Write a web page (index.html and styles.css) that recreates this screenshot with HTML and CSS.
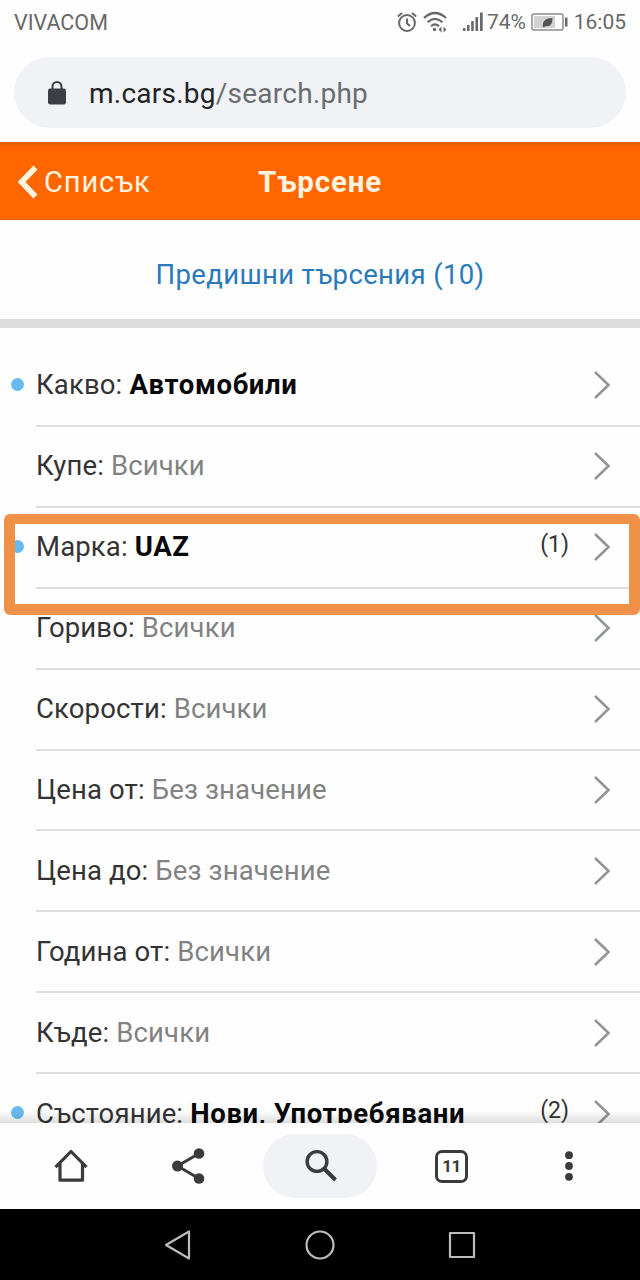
FILE: index.html
```html
<!DOCTYPE html>
<html lang="bg">
<head>
<meta charset="utf-8">
<title>Търсене</title>
<link rel="stylesheet" href="styles.css">
</head>
<body>
<div class="phone">
  <header class="status">
    <span class="carrier">VIVACOM</span>
    <svg class="alarm" width="22" height="22" viewBox="0 0 22 22" fill="none" stroke="#686868" stroke-width="2"><circle cx="11" cy="12" r="7.9"/><path d="M11 7.500v5l3 2.500M1.800 5.500l4.200-3.500M20.200 5.500L16 2"/></svg>
    <svg class="wifi" width="26" height="22" viewBox="0 0 26 22" fill="none" stroke="#686868" stroke-width="2.200"><path d="M1 7Q12-3 23 7M4.500 11.200Q12 4.500 19.500 11.200M8 15.200Q12 11.500 16 15.200"/><circle cx="11.500" cy="18.500" r="1.700" fill="#686868" stroke="none"/><path d="M18.500 15.500v6l-3-3zM20.500 15.500v6l3-3z" fill="#686868" stroke="none"/></svg>
    <svg class="signal" width="22" height="22" viewBox="0 0 22 22" fill="#686868"><path d="M1 17h2.500v3H1zM5 14h2.500v6H5zM9.200 10h2.500v10H9.200zM13.500 6H16v14h-2.500zM18 1.500h2.700V20H18z"/></svg>
    <span class="percent">74%</span>
    <svg class="battery" width="38" height="20" viewBox="0 0 38 20"><rect x="1" y="2" width="31" height="16" rx="2" fill="#fff" stroke="#8c8c8c" stroke-width="1.500"/><path d="M3 4h21v12H3z" fill="#d2d2d2"/><path d="M12 15c-1-6 3-9 9.500-9 0 6-2.500 9-7 8l-1.500 1.500z" fill="#555"/><path d="M34 5.500h2.500v9H34z" fill="#686868"/></svg>
    <span class="clock">16:05</span>
  </header>
  <div class="address">
    <div class="url">
      <svg class="lock" width="18" height="24" viewBox="0 0 18 24"><path d="M4.500 9V5.500a4.500 4.500 0 0 1 9 0V9" fill="none" stroke="#3c3f43" stroke-width="2"/><rect y="7.500" width="18" height="16" rx="2.200" fill="#3c3f43"/></svg>
      <span class="url-text">m.cars.bg<span class="path">/search.php</span></span>
    </div>
  </div>
  <nav class="titlebar">
    <a class="back"><svg width="21" height="34" viewBox="0 0 21 34" fill="none" stroke="#fff4df" stroke-width="5.600"><path d="M18.500 2.500L4.500 17l14 14.500"/></svg><span>Списък</span></a>
    <h1 class="title">Търсене</h1>
  </nav>
  <a class="previous">Предишни търсения (10)</a>
  <main class="list">
    <div class="row marked"><span class="label">Какво: <b>Автомобили</b></span><svg class="chev" viewBox="0 0 18 30"><path d="M2 2l13.500 13L2 28"/></svg></div>
    <div class="row"><span class="label">Купе: <i>Всички</i></span><svg class="chev" viewBox="0 0 18 30"><path d="M2 2l13.500 13L2 28"/></svg></div>
    <div class="row marked"><span class="label">Марка: <b>UAZ</b></span><span class="count">(1)</span><svg class="chev" viewBox="0 0 18 30"><path d="M2 2l13.500 13L2 28"/></svg><div class="highlight"></div></div>
    <div class="row"><span class="label">Гориво: <i>Всички</i></span><svg class="chev" viewBox="0 0 18 30"><path d="M2 2l13.500 13L2 28"/></svg></div>
    <div class="row"><span class="label">Скорости: <i>Всички</i></span><svg class="chev" viewBox="0 0 18 30"><path d="M2 2l13.500 13L2 28"/></svg></div>
    <div class="row"><span class="label">Цена от: <i>Без значение</i></span><svg class="chev" viewBox="0 0 18 30"><path d="M2 2l13.500 13L2 28"/></svg></div>
    <div class="row"><span class="label">Цена до: <i>Без значение</i></span><svg class="chev" viewBox="0 0 18 30"><path d="M2 2l13.500 13L2 28"/></svg></div>
    <div class="row"><span class="label">Година от: <i>Всички</i></span><svg class="chev" viewBox="0 0 18 30"><path d="M2 2l13.500 13L2 28"/></svg></div>
    <div class="row"><span class="label">Къде: <i>Всички</i></span><svg class="chev" viewBox="0 0 18 30"><path d="M2 2l13.500 13L2 28"/></svg></div>
    <div class="row marked"><span class="label">Състояние: <b>Нови, Употребявани</b></span><span class="count">(2)</span><svg class="chev" viewBox="0 0 18 30"><path d="M2 2l13.500 13L2 28"/></svg></div>
  </main>
  <div class="toolbar">
    <svg class="home" width="34" height="34" viewBox="0 0 34 34" fill="none" stroke="#3a3b3d" stroke-width="3.200" stroke-linejoin="round"><path d="M1.500 18.200L17 2.500l15.500 15.700M6 14.500v16.700h22.500V14.500"/></svg>
    <svg class="share" width="34" height="36" viewBox="0 0 34 36"><path d="M28 5.500L6.500 18 28 30.500" fill="none" stroke="#3a3b3d" stroke-width="3"/><g fill="#3a3b3d"><circle cx="28" cy="5.500" r="5.300"/><circle cx="6.500" cy="18" r="5.500"/><circle cx="28" cy="30.500" r="5.300"/></g></svg>
    <span class="search"><svg width="34" height="34" viewBox="0 0 34 34" fill="none" stroke="#3a3b3d"><circle cx="13" cy="12.500" r="9.900" stroke-width="3.400"/><path d="M20 19.500l11.500 11.500" stroke-width="4"/></svg></span>
    <span class="tabs">11</span>
    <svg class="more" width="8" height="30" viewBox="0 0 8 30" fill="#3a3b3d"><circle cx="4" cy="4.200" r="3.900"/><circle cx="4" cy="15" r="3.900"/><circle cx="4" cy="25.800" r="3.900"/></svg>
  </div>
  <footer class="sysnav">
    <svg width="28" height="32" viewBox="0 0 28 32"><path d="M2 16L25 2.500v27z"/></svg>
    <svg class="circle" width="32" height="32" viewBox="0 0 32 32"><circle cx="16" cy="16" r="13.500"/></svg>
    <svg width="28" height="28" viewBox="0 0 28 28"><path d="M2 2h24v24H2z"/></svg>
  </footer>
</div>
</body>
</html>
```
FILE: styles.css
```css
* { box-sizing: border-box; }
body { margin: 0; background: #fff; font-family: Roboto, "Liberation Sans", sans-serif; }
svg { display: block; flex: none; }
.phone { width: 640px; height: 1280px; display: flex; flex-direction: column; overflow: hidden; background: #fefefe; }
.status { height: 44px; flex: none; display: flex; align-items: center; padding: 0 14px; color: #686868; font-size: 21.5px; white-space: nowrap; }
.carrier { width: 382px; flex: none; }
.wifi { margin-left: 5px; }
.signal { margin-left: 13px; }
.percent { width: 43px; margin-left: 3px; font-size: 21px; }
.battery { margin-left: 4px; }
.clock { margin-left: 5px; font-size: 21px; }
.address { height: 98px; flex: none; padding: 13px 14px 0; }
.url { height: 71px; border-radius: 36px; background: #f1f2f6; display: flex; align-items: center; padding-left: 34px; }
.url-text { margin-left: 23px; padding-top: 3px; font-size: 28px; line-height: 34px; letter-spacing: .24px; color: #222326; }
.path { color: #6a6c70; }
.titlebar { height: 78px; flex: none; background: #ff6600; border-top: 1px solid #d9630f; border-bottom: 1px solid #d9630f; display: grid; grid-template-columns: 1fr auto 1fr; align-items: center; box-shadow: inset 0 5px 5px -5px #c95714; color: #fff4df; font-size: 29px; line-height: 34px; letter-spacing: .9px; }
.back { display: flex; align-items: center; gap: 6px; padding: 1px 0 0 17px; }
.title { margin: 0; font-size: 29.5px; font-weight: 700; padding-top: 2px; letter-spacing: .8px; }
.previous { height: 108px; flex: none; border-bottom: 9px solid #ddd; display: flex; align-items: center; justify-content: center; padding-top: 9px; color: #2a7abb; font-size: 27.5px; letter-spacing: .35px; }
.list { height: 795px; flex: none; padding-top: 18px; overflow: hidden; position: relative; }
.list::after { content: ""; position: absolute; inset: auto 0 0; height: 12px; background: linear-gradient(transparent, rgba(0, 0, 0, .13)); }
.row { position: relative; height: 80.92px; margin-left: 36px; padding: 0 29px 0 0; border-bottom: 2px solid #dedede; display: flex; align-items: center; color: #333; font-size: 27.5px; line-height: 32px; }
.row.marked::before { content: ""; position: absolute; left: -25px; top: 32px; width: 13px; height: 13px; border-radius: 50%; background: #68baf0; }
.label { flex: 1; white-space: nowrap; letter-spacing: .14px; }
.label i { font-style: normal; color: #828282; }
.label b { color: #080808; font-weight: 700; letter-spacing: .65px; }
.count { margin-right: 24px; padding-bottom: 5px; font-size: 23px; }
.chev { width: 18px; height: 30px; fill: none; stroke: #929697; stroke-width: 2.6; }
.highlight { position: absolute; left: -32px; top: 6px; width: 636px; height: 101px; border: 10px solid #f0914a; border-width: 10px 11px 11px; border-radius: 6px; z-index: 2; }
.toolbar { height: 86px; flex: none; display: flex; align-items: center; padding-left: 54px; background: #fefefe; }
.share { margin-left: 83px; }
.search { width: 114px; height: 64px; margin-left: 58px; padding-left: 2px; border-radius: 32px; background: #f1f2f6; display: flex; align-items: center; justify-content: center; }
.tabs { width: 33px; height: 33px; margin-left: 58px; border: 3px solid #3a3b3d; border-radius: 7px; display: flex; align-items: center; justify-content: center; font-size: 17px; font-weight: 700; color: #3a3b3d; letter-spacing: -.4px; }
.more { margin-left: 97px; }
.sysnav { height: 71px; flex: none; display: flex; align-items: center; padding-left: 164px; background: #000; }
.sysnav svg { fill: none; stroke: #bcbcbc; stroke-width: 2.2; stroke-linejoin: round; }
.sysnav .circle { margin: 0 112px; }
```
